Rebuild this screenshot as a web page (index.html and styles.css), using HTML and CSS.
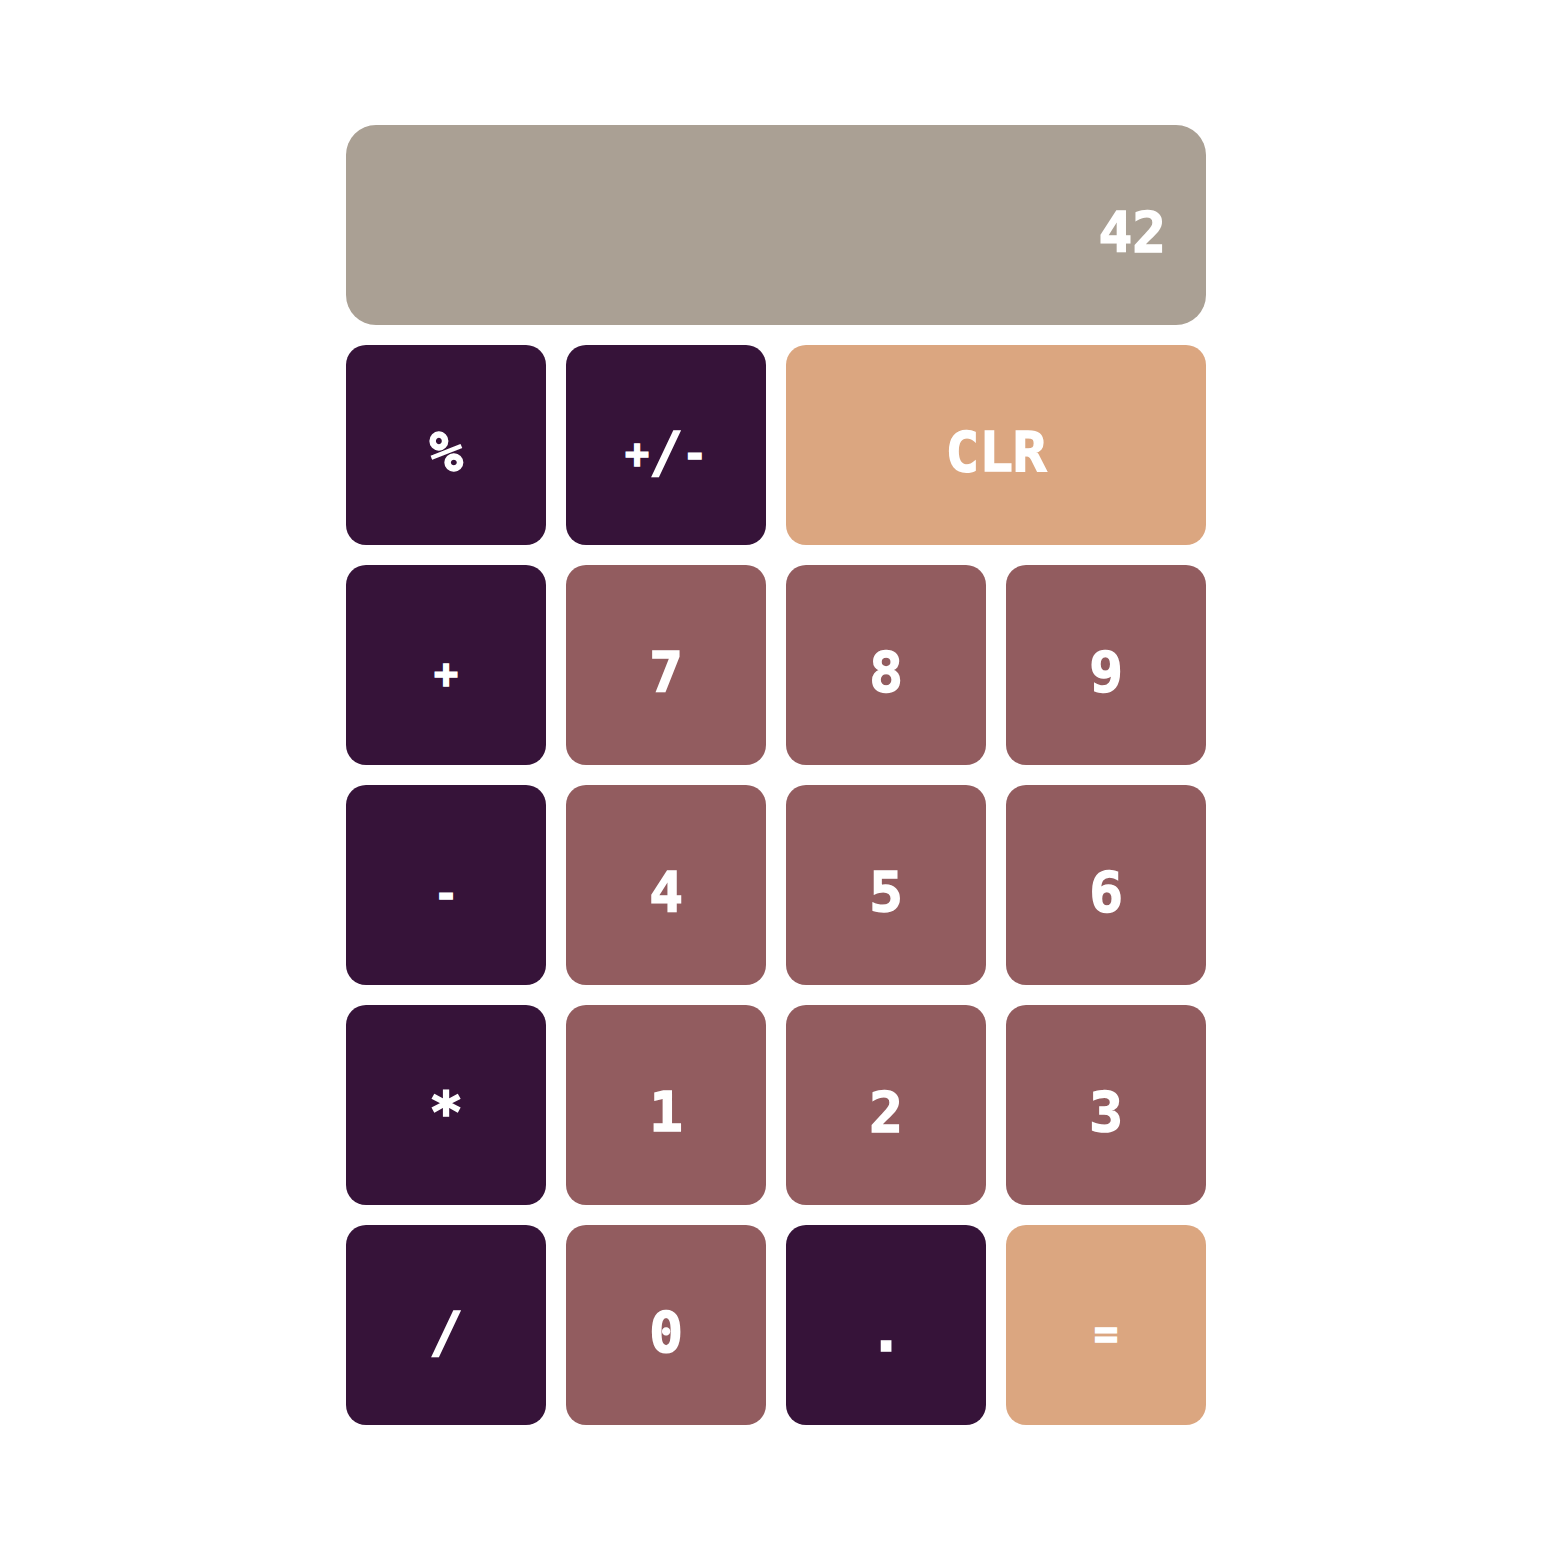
FILE: index.html
```html
<!DOCTYPE html>
<html lang="en">
<head>
  <meta charset="UTF-8">
  <title>Calculator</title>
  <link rel="stylesheet" href="styles.css">
</head>
<body>
  <div class="calculator">
    <div class="display">42</div>
    <button class="key dark">%</button>
    <button class="key dark"><span class="small">+</span>/<span class="small">-</span></button>
    <button class="key accent wide">CLR</button>
    <button class="key dark"><span class="small">+</span></button>
    <button class="key num">7</button>
    <button class="key num">8</button>
    <button class="key num">9</button>
    <button class="key dark"><span class="small">-</span></button>
    <button class="key num">4</button>
    <button class="key num">5</button>
    <button class="key num">6</button>
    <button class="key dark">*</button>
    <button class="key num">1</button>
    <button class="key num">2</button>
    <button class="key num">3</button>
    <button class="key dark">/</button>
    <button class="key num">0</button>
    <button class="key dark">.</button>
    <button class="key accent"><span class="small">=</span></button>
  </div>
</body>
</html>
```
FILE: styles.css
```css
body {
  margin: 0;
  padding: 0;
  background-color: #fff;
  font-family: "DejaVu Sans Mono", "Liberation Mono", monospace;
}
.calculator {
  display: grid;
  grid-template-columns: repeat(4, 200px);
  grid-auto-rows: 200px;
  gap: 20px;
  width: 860px;
  margin: 125px auto 0;
}
.display {
  grid-column: span 4;
  display: flex;
  align-items: center;
  justify-content: flex-end;
  padding: 12px 40px 0 0;
  box-sizing: border-box;
  background-color: #aaa094;
  border-radius: 30px;
  color: #fff;
  font-size: 56px;
  font-weight: bold;
  -webkit-text-stroke: 1.5px #fff;
}
.key {
  padding: 12px 0 0;
  border: none;
  border-radius: 20px;
  color: #fff;
  font-family: inherit;
  font-size: 56px;
  font-weight: bold;
  -webkit-text-stroke: 1.5px #fff;
}
.small {
  vertical-align: 3px;
  font-size: 40px;
}
.dark {
  background-color: #361339;
}
.num {
  background-color: #925c5f;
}
.accent {
  background-color: #dba680;
}
.wide {
  grid-column: span 2;
}
```
